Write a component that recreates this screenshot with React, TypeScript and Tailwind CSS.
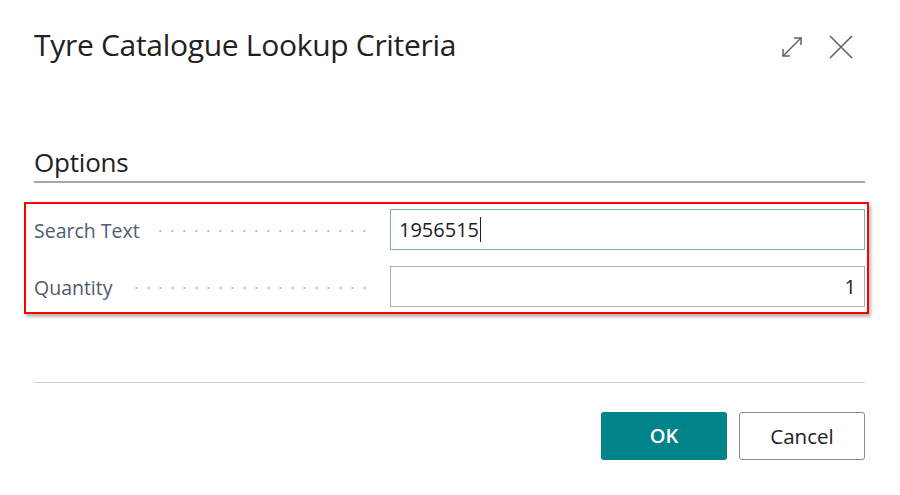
export default function App() {
  return (
    <div className="h-[495px] w-[900px] bg-white pl-[34px] pr-[35px] font-['Open_Sans',sans-serif] text-[#212121]">
      {/* Header */}
      <div className="flex h-[92px] items-start justify-between pt-[25px]">
        <h1 className="text-[30px] leading-[40px] tracking-[-0.3px]">Tyre Catalogue Lookup Criteria</h1>
        <div className="mr-[12px] flex items-center gap-[26px] pt-[10px] text-[#616161]">
          <svg width="22" height="22" viewBox="0 0 22 22" fill="none" stroke="currentColor" strokeWidth="1.5">
            <path d="M2 20 L20 2" />
            <path d="M13 2 H20 V9" />
            <path d="M2 13 V20 H9" />
          </svg>
          <svg width="24" height="24" viewBox="0 0 24 24" fill="none" stroke="currentColor" strokeWidth="1.6">
            <path d="M1 1 L23 23 M23 1 L1 23" />
          </svg>
        </div>
      </div>

      {/* Options group */}
      <div className="mt-[53px] border-b-2 border-[#a3a8b0] pb-[2px]">
        <h2 className="text-[26px] leading-[34px] tracking-[-0.2px]">Options</h2>
      </div>

      <div className="-ml-[10px] -mr-[4px] mt-[19px] border-2 border-[#ff0000] pl-[8px] pr-[2px] py-[5px] shadow-[2px_3px_3px_rgba(0,0,0,0.28)]">
        <div className="flex flex-col gap-[16px]">
          <Field label="Search Text" focused>
            <span className="text-[20px] text-[#212121]">1956515</span>
            <span className="ml-[1px] h-[25px] border-l border-[#212121]" />
          </Field>
          <Field label="Quantity">
            <span className="ml-auto text-[20px] text-[#212121]">1</span>
          </Field>
        </div>
      </div>

      {/* Footer */}
      <div className="mt-[68px] border-t border-[#d4d4d4]" />
      <div className="mt-[29px] flex justify-end gap-[12px]">
        <button className="h-[48px] w-[126px] rounded-[3px] bg-[#008489] text-[20px] font-semibold text-white">
          OK
        </button>
        <button className="h-[48px] w-[126px] rounded-[3px] border border-[#8a8a8a] bg-white text-[20.5px] text-[#212121]">
          Cancel
        </button>
      </div>
    </div>
  );
}

function Field({
  label,
  focused,
  children,
}: {
  label: string;
  focused?: boolean;
  children: React.ReactNode;
}) {
  return (
    <div className="flex h-[41px] items-center">
      <div className="flex w-[356px] items-center pr-[20px] pt-[2px]">
        <span className="text-[19.5px] text-[#505c6d]">{label}</span>
        <span className="ml-[14px] h-[4px] flex-1 bg-[radial-gradient(circle,#b5b9c0_1px,transparent_1.3px)] bg-[length:12px_4px] bg-repeat-x bg-right" />
      </div>
      <div
        className={
          focused
            ? "flex h-[41px] flex-1 items-center border border-[#6fb7b7] px-[8px]"
            : "flex h-[41px] flex-1 items-center border border-[#a5adb8] px-[8px]"
        }
      >
        {children}
      </div>
    </div>
  );
}
